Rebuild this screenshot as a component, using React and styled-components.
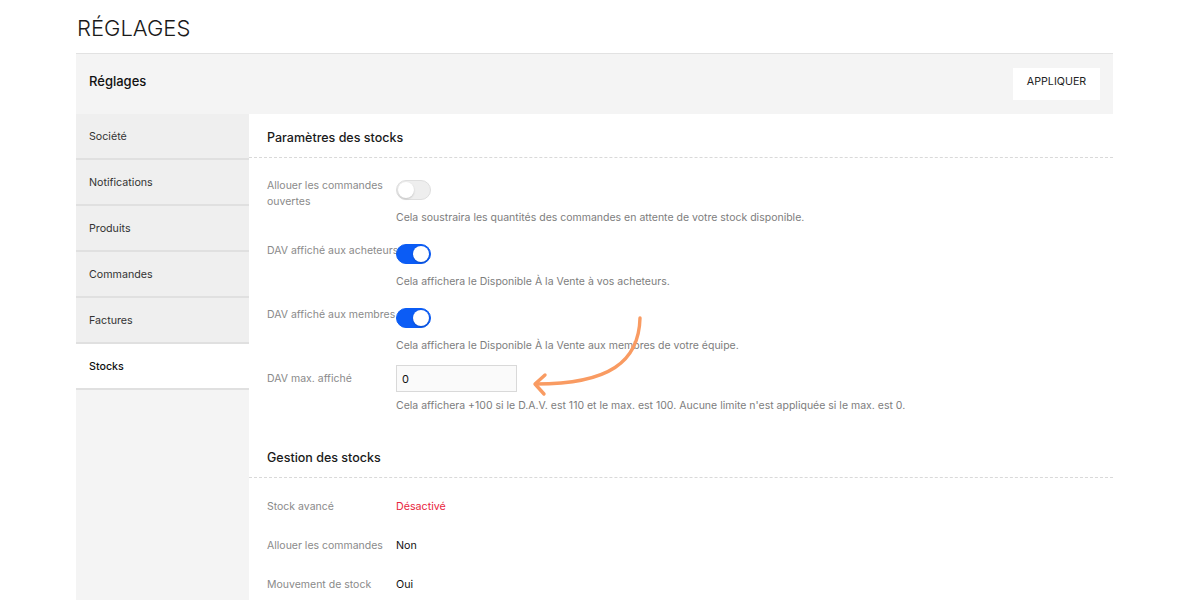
import React from 'react';
import styled, { createGlobalStyle } from 'styled-components';

const GlobalStyle = createGlobalStyle`
  html, body {
    margin: 0;
    padding: 0;
    background: #ffffff;
    font-family: Inter, "Noto Sans", "Liberation Sans", sans-serif;
    color: #222;
  }
`;

const Page = styled.div`
  width: 1200px;
  height: 600px;
  overflow: hidden;
  padding-left: 76px;
  box-sizing: border-box;
`;

const PageTitle = styled.h1`
  margin: 0;
  height: 53px;
  line-height: 56px;
  padding-left: 1px;
  font-size: 22px;
  font-weight: 300;
  color: #1a1a1a;
`;

const Card = styled.div`
  position: relative;
  width: 1037px;
  border-top: 1px solid #e2e2e2;
`;

const CardHeader = styled.div`
  height: 60px;
  background: #f4f4f4;
  display: flex;
  align-items: center;
  justify-content: space-between;
  padding: 0 13px;
`;

const CardTitle = styled.div`
  font-size: 13px;
  font-weight: 500;
  color: #111;
  padding-bottom: 6px;
`;

const ApplyButton = styled.button`
  width: 87px;
  height: 32px;
  border: none;
  background: #fff;
  font-family: inherit;
  font-size: 10.7px;
  font-weight: 400;
  color: #222;
  padding: 0 0 4px;
  margin-top: -1px;
  cursor: pointer;
`;

const Body = styled.div`
  display: flex;
  min-height: 500px;
`;

const Sidebar = styled.nav`
  width: 173px;
  flex-shrink: 0;
  background: #f4f4f4;
`;

const NavItem = styled.div`
  height: 44px;
  display: flex;
  align-items: center;
  padding-left: 13px;
  font-size: 10.7px;
  color: ${(p) => (p.$active ? '#111' : '#333')};
  font-weight: ${(p) => (p.$active ? 500 : 400)};
  background: ${(p) => (p.$active ? '#ffffff' : '#efefef')};
  border-bottom: 2px solid #e0e0e0;
`;

const Content = styled.div`
  flex: 1;
  background: #fff;
`;

const SectionHeader = styled.div`
  padding: 16px 18px 0;
  height: 27px;
  border-bottom: 1px dashed #d9d9d9;
  font-size: 12.5px;
  line-height: 16px;
  font-weight: 500;
  color: #1a1a1a;
`;

const SectionBody = styled.div`
  padding: ${(p) => p.$padding};
`;

const Setting = styled.div`
  display: grid;
  grid-template-columns: 129px 1fr;
  align-items: start;
  margin-bottom: ${(p) => p.$gap || 0}px;
`;

const Label = styled.div`
  grid-row: ${(p) => (p.$span ? '1 / 3' : 'auto')};
  font-size: 10.5px;
  line-height: 16px;
  color: #8a8a8a;
  white-space: ${(p) => (p.$nowrap ? 'nowrap' : 'normal')};
  padding-right: 4px;
  margin-top: ${(p) => p.$offset || 0}px;
  align-self: ${(p) => (p.$center ? 'center' : 'start')};
`;

const Control = styled.div`
  grid-column: 2;
  grid-row: 1;
  display: flex;
  align-items: center;
`;

const Description = styled.div`
  grid-column: 2;
  grid-row: 2;
  font-size: 10.5px;
  line-height: 16px;
  color: #7d7d7d;
  margin-top: ${(p) => p.$top}px;
`;

const Toggle = styled.div`
  position: relative;
  width: 35px;
  height: 20px;
  border-radius: 10px;
  box-sizing: border-box;
  background: ${(p) => (p.$on ? '#0b5cf5' : '#eeeeee')};
  border: 1px solid ${(p) => (p.$on ? '#0b5cf5' : '#dedede')};

  &::after {
    content: '';
    position: absolute;
    top: 1px;
    left: ${(p) => (p.$on ? '16px' : '1px')};
    width: 16px;
    height: 16px;
    border-radius: 50%;
    background: #fff;
    box-shadow: 0 1px 2px rgba(0, 0, 0, 0.18);
  }
`;

const NumberInput = styled.input`
  width: 121px;
  height: 27px;
  box-sizing: border-box;
  border: 1px solid #d9d9d9;
  background: #fafafa;
  padding: 0 5px;
  font-family: inherit;
  font-size: 11px;
  color: #111;
  outline: none;
`;

const InfoRow = styled.div`
  display: grid;
  grid-template-columns: 129px 1fr;
  height: 39px;
  align-items: center;
`;

const InfoLabel = styled.div`
  font-size: 10.5px;
  color: #8a8a8a;
  white-space: nowrap;
`;

const InfoValue = styled.div`
  font-size: 10.7px;
  color: ${(p) => (p.$danger ? '#e8253d' : '#111')};
`;

const Arrow = styled.svg`
  position: absolute;
  left: 443px;
  top: 250px;
  pointer-events: none;
`;

const navItems = ['Société', 'Notifications', 'Produits', 'Commandes', 'Factures', 'Stocks'];

const App = () => {
  return (
    <Page>
      <GlobalStyle />
      <PageTitle>RÉGLAGES</PageTitle>
      <Card>
        <CardHeader>
          <CardTitle>Réglages</CardTitle>
          <ApplyButton>APPLIQUER</ApplyButton>
        </CardHeader>
        <Body>
          <Sidebar>
            {navItems.map((item) => (
              <NavItem key={item} $active={item === 'Stocks'}>
                {item}
              </NavItem>
            ))}
          </Sidebar>
          <Content>
            <SectionHeader>Paramètres des stocks</SectionHeader>
            <SectionBody $padding="22px 18px 20px">
              <Setting $gap={18}>
                <Label $span $offset={-2}>Allouer les commandes ouvertes</Label>
                <Control>
                  <Toggle />
                </Control>
                <Description $top={10}>
                  Cela soustraira les quantités des commandes en attente de votre stock disponible.
                </Description>
              </Setting>
              <Setting $gap={18}>
                <Label $span $nowrap $offset={-1}>DAV affiché aux acheteurs</Label>
                <Control>
                  <Toggle $on />
                </Control>
                <Description $top={10}>
                  Cela affichera le Disponible À la Vente à vos acheteurs.
                </Description>
              </Setting>
              <Setting $gap={11}>
                <Label $span $nowrap $offset={-1}>DAV affiché aux membres</Label>
                <Control>
                  <Toggle $on />
                </Control>
                <Description $top={10}>
                  Cela affichera le Disponible À la Vente aux membres de votre équipe.
                </Description>
              </Setting>
              <Setting>
                <Label $center>DAV max. affiché</Label>
                <Control>
                  <NumberInput defaultValue="0" />
                </Control>
                <Description $top={6}>
                  Cela affichera +100 si le D.A.V. est 110 et le max. est 100. Aucune limite n'est appliquée si le max. est 0.
                </Description>
              </Setting>
            </SectionBody>
            <SectionHeader>Gestion des stocks</SectionHeader>
            <SectionBody $padding="9px 18px 0">
              <InfoRow>
                <InfoLabel>Stock avancé</InfoLabel>
                <InfoValue $danger>Désactivé</InfoValue>
              </InfoRow>
              <InfoRow>
                <InfoLabel>Allouer les commandes</InfoLabel>
                <InfoValue>Non</InfoValue>
              </InfoRow>
              <InfoRow>
                <InfoLabel>Mouvement de stock</InfoLabel>
                <InfoValue>Oui</InfoValue>
              </InfoRow>
            </SectionBody>
          </Content>
        </Body>
        <Arrow width="140" height="150" viewBox="0 0 140 150">
          <path
            d="M121 14 C 120 58, 90 80, 17 80"
            fill="none"
            stroke="#f99b62"
            strokeWidth="3.4"
            strokeLinecap="round"
          />
          <path
            d="M26 71 L 16 80 L 25 90"
            fill="none"
            stroke="#f99b62"
            strokeWidth="3.4"
            strokeLinecap="round"
            strokeLinejoin="round"
          />
        </Arrow>
      </Card>
    </Page>
  );
};

export default App;
